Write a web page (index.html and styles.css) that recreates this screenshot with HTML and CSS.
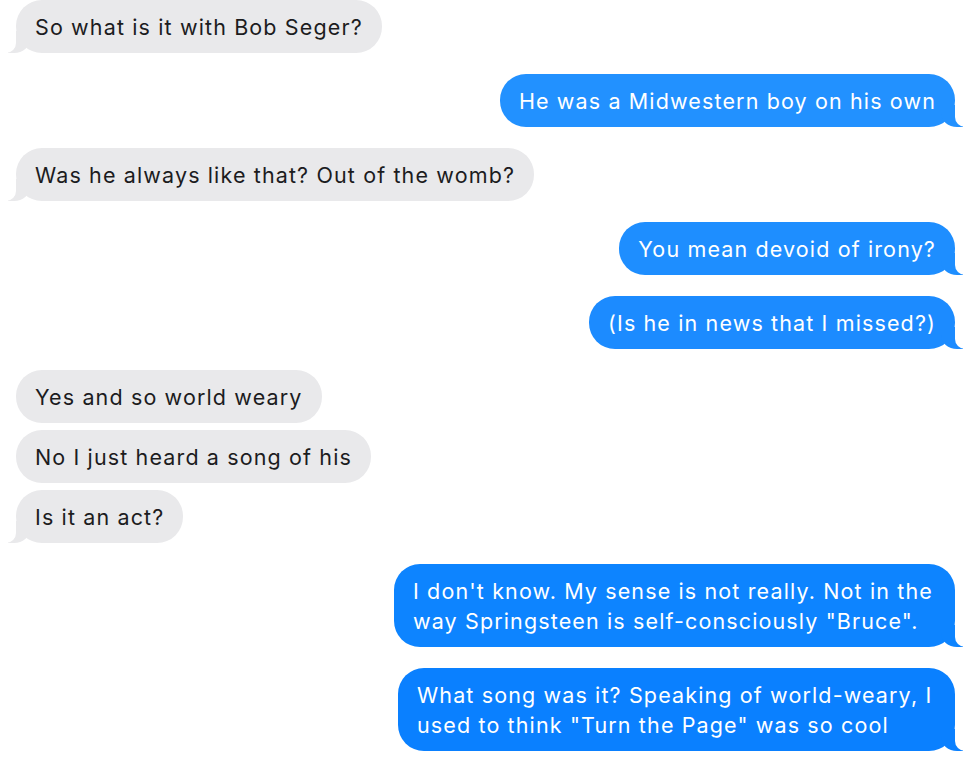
FILE: index.html
```html
<!DOCTYPE html>
<html lang="en">
<head>
<meta charset="utf-8">
<title>Messages</title>
<link rel="stylesheet" href="styles.css">
</head>
<body>
<div class="chat">
  <div class="msg in tail">So what is it with Bob Seger?</div>
  <div class="msg out tail c1">He was a Midwestern boy on his own</div>
  <div class="msg in tail">Was he always like that? Out of the womb?</div>
  <div class="msg out tail c2">You mean devoid of irony?</div>
  <div class="msg out tail c3">(Is he in news that I missed?)</div>
  <div class="msg in">Yes and so world weary</div>
  <div class="msg in">No I just heard a song of his</div>
  <div class="msg in tail">Is it an act?</div>
  <div class="msg out tail c4 wide">I don't know. My sense is not really. Not in the way Springsteen is self-consciously "Bruce".</div>
  <div class="msg out tail c5 wide2">What song was it? Speaking of world-weary, I used to think "Turn the Page" was so cool</div>
</div>
</body>
</html>
```
FILE: styles.css
```css
html, body {
  margin: 0;
  background: #ffffff;
}

.chat {
  display: flex;
  flex-direction: column;
  padding: 0 21px 0 16px;
  font-family: "Inter", "Liberation Sans", sans-serif;
  font-size: 21.5px;
  letter-spacing: 1.13px;
  line-height: 30px;
}

.msg {
  position: relative;
  box-sizing: border-box;
  padding: 11.5px 19px;
  border-radius: 26px;
  margin-bottom: 7px;
  max-width: 561px;
}

.msg.tail {
  margin-bottom: 21px;
}

.in {
  align-self: flex-start;
  background: #e9e9eb;
  color: #1c1c1e;
}

.out {
  align-self: flex-end;
  background: #1f8fff;
  color: #ffffff;
}

.c1 { background: #2291ff; }
.c2 { background: #1e8eff; }
.c3 { background: #1c8bff; }
.c4 { background: #0d84ff; }
.c5 { background: #0a80ff; }

.wide { max-width: 561px; }
.wide2 { max-width: 557px; }

/* tails */
.msg.tail::before,
.msg.tail::after {
  content: "";
  position: absolute;
  bottom: 0;
  height: 22px;
}

.out.tail::before {
  right: -8px;
  width: 22px;
  background: inherit;
  border-bottom-left-radius: 16px 14px;
}

.out.tail::after {
  right: -12px;
  width: 12px;
  background: #ffffff;
  border-bottom-left-radius: 10px;
}

.in.tail::before {
  left: -8px;
  width: 22px;
  background: inherit;
  border-bottom-right-radius: 16px 14px;
}

.in.tail::after {
  left: -12px;
  width: 12px;
  background: #ffffff;
  border-bottom-right-radius: 10px;
}
```
